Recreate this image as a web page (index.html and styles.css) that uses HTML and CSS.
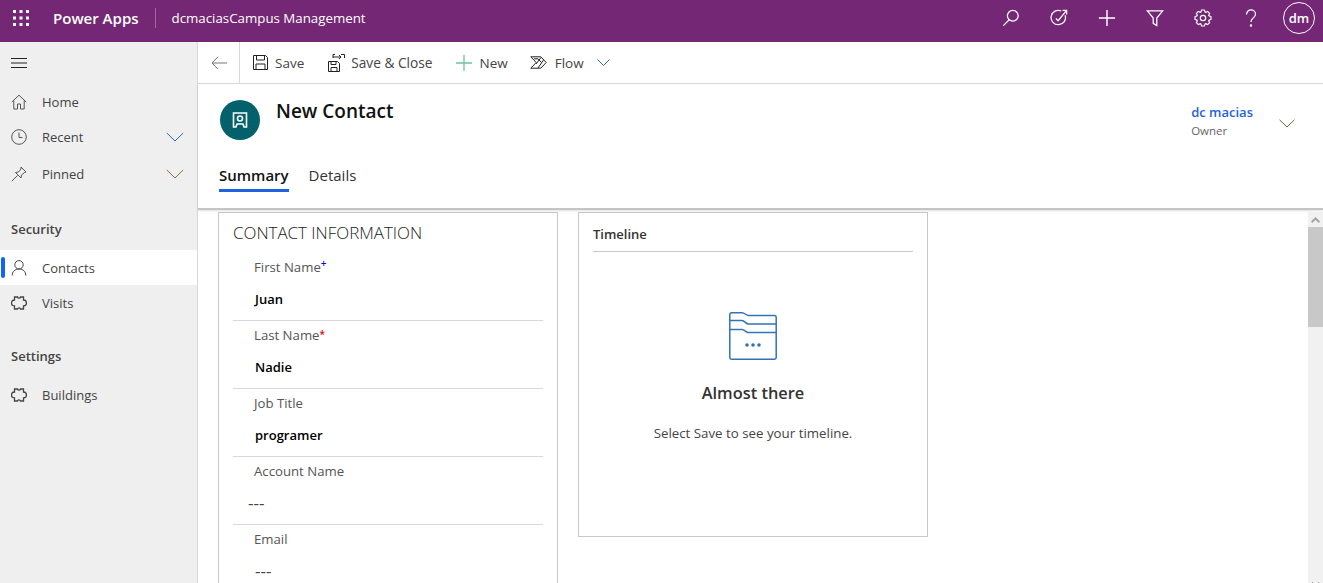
FILE: index.html
```html
<!DOCTYPE html>
<html lang="en">
<head>
    <meta charset="UTF-8">
    <title>New Contact</title>
    <link rel="stylesheet" href="styles.css">
</head>
<body>
    <header class="topbar">
        <svg class="waffle" width="16" height="16" viewBox="0 0 16 16" fill="#fff"><rect x="0" y="0" width="3" height="3"/><rect x="6.5" y="0" width="3" height="3"/><rect x="13" y="0" width="3" height="3"/><rect x="0" y="6.5" width="3" height="3"/><rect x="6.5" y="6.5" width="3" height="3"/><rect x="13" y="6.5" width="3" height="3"/><rect x="0" y="13" width="3" height="3"/><rect x="6.5" y="13" width="3" height="3"/><rect x="13" y="13" width="3" height="3"/></svg>
        <span class="brand">Power Apps</span>
        <span class="app-name">dcmaciasCampus Management</span>
        <div class="top-icons">
            <svg width="18" height="18" viewBox="0 0 20 20" fill="none" stroke="#fff" stroke-width="1.4"><circle cx="12" cy="7.5" r="6"/><path d="M8 12 1.500 18.500"/></svg>
            <svg width="18" height="18" viewBox="0 0 20 20" fill="none" stroke="#fff" stroke-width="1.4"><path d="M16.800 7a8 8 0 1 1-4.300-4.800"/><path d="M6.500 10.500l2.500 2.500 9-11M14 1.500h4.500V6"/></svg>
            <svg width="18" height="18" viewBox="0 0 20 20" fill="none" stroke="#fff" stroke-width="1.6"><path d="M10 1v18M1 10h18"/></svg>
            <svg width="18" height="18" viewBox="0 0 20 20" fill="none" stroke="#fff" stroke-width="1.4"><path d="M1.500 2h17l-6.500 8v8.500l-4-2.500v-6z"/></svg>
            <svg width="18" height="18" viewBox="0 0 20 20" fill="none" stroke="#fff" stroke-width="1.3"><circle cx="10" cy="10" r="3"/><path d="M11.560 1.140 12.390 3.420 12.960 3.660 15.160 2.630 17.370 4.840 16.340 7.040 16.580 7.610 18.860 8.440V11.560L16.580 12.390 16.340 12.960 17.370 15.160 15.160 17.370 12.960 16.340 12.390 16.580 11.560 18.860H8.440L7.610 16.580 7.040 16.340 4.840 17.370 2.630 15.160 3.660 12.960 3.420 12.390 1.140 11.560V8.440L3.420 7.610 3.660 7.040 2.630 4.840 4.840 2.630 7.040 3.660 7.610 3.420 8.440 1.140z"/></svg>
            <svg width="18" height="18" viewBox="0 0 20 20" fill="none" stroke="#fff" stroke-width="1.4"><path d="M5 6C5 3.200 7.200 1 10 1s5 2.200 5 4.800c0 4.200-5 4-5 8.700"/><circle cx="10" cy="18.300" r=".7"/></svg>
            <span class="avatar">dm</span>
        </div>
    </header>

    <div class="shell">
        <nav class="sidebar">
            <div class="burger"><svg width="16" height="12" viewBox="0 0 16 12" stroke="#222" stroke-width="1"><path d="M0 1.500h16M0 6h16M0 10.500h16"/></svg></div>
            <a class="nav-item">
                <svg width="16" height="16" viewBox="0 0 16 16" fill="none" stroke="#555" stroke-width="1"><path d="M.8 8 8 1.200 15.200 8M2.800 6.500v8.500h3.700v-5h3v5h3.700V6.500"/></svg>
                <span>Home</span>
            </a>
            <a class="nav-item">
                <svg width="16" height="16" viewBox="0 0 16 16" fill="none" stroke="#555" stroke-width="1"><circle cx="8" cy="8" r="7.300"/><path d="M8 3.500V8.500h3.500"/></svg>
                <span>Recent</span>
                <svg class="nav-chevron" width="18" height="10" viewBox="0 0 18 10" fill="none" stroke="#2b6ca8" stroke-width="1"><path d="M.800 1 9 9l8.200-8"/></svg>
            </a>
            <a class="nav-item nav-pinned">
                <svg width="16" height="16" viewBox="0 0 16 16" fill="none" stroke="#555" stroke-width="1"><path d="M10 1l5 5-1.500.5L10.500 9l-.5 3-5.500-5.500 3-.5 2.500-3zM6.500 9.500.8 15.200"/></svg>
                <span>Pinned</span>
                <svg class="nav-chevron" width="18" height="10" viewBox="0 0 18 10" fill="none" stroke="#8f6a35" stroke-width="1"><path d="M.800 1 9 9l8.200-8"/></svg>
            </a>
            <div class="nav-group">Security</div>
            <a class="nav-item active">
                <svg width="16" height="16" viewBox="0 0 16 16" fill="none" stroke="#444" stroke-width="1"><circle cx="8" cy="4.800" r="4.200"/><path d="M1.200 15.500c0-4 2.800-6.500 6.800-6.500s6.800 2.500 6.800 6.500"/></svg>
                <span>Contacts</span>
            </a>
            <a class="nav-item">
                <svg width="16" height="14" viewBox="0 0 16 14" fill="none" stroke="#444" stroke-width="1.300"><path d="M3.500 1H6.500C6.800 2.400 9.200 2.400 9.500 1H12.500V4C14 4 15.500 4.800 15.500 7 15.500 9.200 14 10 12.500 10V13H9.500C9.200 11.600 6.800 11.600 6.500 13H3.500V10C2 10 .5 9.200 .5 7 .5 4.800 2 4 3.500 4z"/></svg>
                <span>Visits</span>
            </a>
            <div class="nav-group nav-group-second">Settings</div>
            <a class="nav-item">
                <svg width="16" height="14" viewBox="0 0 16 14" fill="none" stroke="#444" stroke-width="1.300"><path d="M3.500 1H6.500C6.800 2.400 9.200 2.400 9.500 1H12.500V4C14 4 15.500 4.800 15.500 7 15.500 9.200 14 10 12.500 10V13H9.500C9.200 11.600 6.800 11.600 6.500 13H3.500V10C2 10 .5 9.200 .5 7 .5 4.800 2 4 3.500 4z"/></svg>
                <span>Buildings</span>
            </a>
        </nav>

        <main class="main">
            <div class="commandbar">
                <div class="back"><svg width="16" height="14" viewBox="0 0 16 14" fill="none" stroke="#777" stroke-width="1"><path d="M7 .8 1 7l6 6.200M1 7h15"/></svg></div>
                <button class="cmd cmd-first">
                    <svg width="15" height="15" viewBox="0 0 15 15" fill="none" stroke="#222" stroke-width="1"><path d="M.5.500h12l2 2v12H.5zM3.500.500v4.500h8V.500M3 14.500V9h9v5.500"/></svg>
                    Save
                </button>
                <button class="cmd cmd-close">
                    <svg width="17" height="18" viewBox="0 0 17 18" fill="none" stroke="#222" stroke-width="1"><path d="M.5 7.500h9l2 2v8H.5zM3 7.500v3h5v-3M3 17.500v-4h6v4M5 4V.500h2M13 .500h3.500V4M5 3h8M11 1l2 2-2 2"/></svg>
                    Save &amp; Close
                </button>
                <button class="cmd cmd-new">
                    <svg width="16" height="16" viewBox="0 0 16 16" fill="none" stroke="#6fc295" stroke-width="1.300"><path d="M8 0v16M0 8h16"/></svg>
                    New
                </button>
                <button class="cmd cmd-flow">
                    <svg width="17" height="13" viewBox="0 0 17 13" fill="none" stroke="#222" stroke-width="1"><path d="M.800.800h10l5.400 5.700-5.400 5.700H.800l5.400-5.700zM4 2.800h4l3.500 3.700M13.500 4 8 12M11 1.500 6 8"/></svg>
                    Flow
                </button>
                <svg class="cmd-chevron" width="13" height="7" viewBox="0 0 13 7" fill="none" stroke="#2b6ca8" stroke-width="1"><path d="M.500.500l6 6 6-6"/></svg>
            </div>

            <div class="record-header">
                <div class="record-top">
                    <div class="record-icon">
                        <svg width="16" height="16" viewBox="0 0 16 16" fill="none" stroke="#fff" stroke-width="1.600"><path d="M1.500 15V1h13v14h-2.500l-1-3H5l-1 3z"/><circle cx="8" cy="6.500" r="2.500"/></svg>
                    </div>
                    <h1 class="record-title">New Contact</h1>
                    <div class="owner">
                        <a class="owner-name">dc macias</a>
                        <span class="owner-role">Owner</span>
                    </div>
                    <svg class="owner-chevron" width="16" height="9" viewBox="0 0 16 9" fill="none" stroke="#7a5f38" stroke-width="1"><path d="M.500.800 8 8 15.500.800"/></svg>
                </div>
                <div class="tabs">
                    <a class="tab tab-active">Summary</a>
                    <a class="tab">Details</a>
                </div>
            </div>

            <div class="content">
                <div class="sections">
                    <section class="card contact-card">
                        <h2 class="card-title">CONTACT INFORMATION</h2>
                        <div class="field">
                            <label>First Name<sup class="mark-blue">+</sup></label>
                            <div class="value">Juan</div>
                        </div>
                        <div class="field">
                            <label>Last Name<sup class="mark-red">*</sup></label>
                            <div class="value">Nadie</div>
                        </div>
                        <div class="field">
                            <label>Job Title</label>
                            <div class="value">programer</div>
                        </div>
                        <div class="field">
                            <label>Account Name</label>
                            <div class="value value-empty value-out">---</div>
                        </div>
                        <div class="field">
                            <label>Email</label>
                            <div class="value value-empty">---</div>
                        </div>
                    </section>
                    <section class="card timeline-card">
                        <h2 class="timeline-title">Timeline</h2>
                        <div class="timeline-body">
                            <svg width="48" height="48" viewBox="0 0 48 48" fill="none" stroke="#3273b5" stroke-width="1.500"><path d="M.8 2.500A1.700 1.700 0 0 1 2.500.8h10.500c3 0 4 2.700 6.500 2.700h26a1.700 1.700 0 0 1 1.700 1.700v40.300a1.700 1.700 0 0 1-1.700 1.700H2.500a1.700 1.700 0 0 1-1.700-1.700z"/><path d="M.8 8.500h12c3 0 4 3.500 6.500 3.500h28M.8 17.500h12c3 0 4 3 6.500 3h28"/><g fill="#3273b5" stroke="none"><circle cx="18" cy="33" r="1.800"/><circle cx="24" cy="33" r="1.800"/><circle cx="30" cy="33" r="1.800"/></g></svg>
                            <h3 class="almost">Almost there</h3>
                            <p class="almost-text">Select Save to see your timeline.</p>
                        </div>
                    </section>
                </div>
                <div class="scrollbar">
                    <div class="scroll-up"><svg width="9" height="6" viewBox="0 0 9 6" fill="#a0a0a0"><path d="M4.500 0 9 4.500 7.800 6 4.500 2.800 1.200 6 0 4.500z"/></svg></div>
                    <div class="scroll-thumb"></div>
                    <div class="scroll-down"></div>
                </div>
            </div>
        </main>
    </div>
</body>
</html>
```

FILE: styles.css
```css
* {
    box-sizing: border-box;
}

html, body {
    height: 100%;
}

body {
    margin: 0;
    overflow: hidden;
    font-family: "Open Sans", "Noto Sans", Arial, sans-serif;
    font-size: 13px;
    color: #333;
    background-color: white;
}

/* top bar */
.topbar {
    display: flex;
    align-items: center;
    height: 42px;
    padding-bottom: 6px;
    background-color: #742774;
    color: white;
}

.waffle {
    margin-left: 13px;
}

.brand {
    margin-left: 24px;
    padding-right: 16px;
    border-right: 1px solid #9a6a9a;
    line-height: 20px;
    font-size: 15px;
    font-weight: 600;
}

.app-name {
    margin-left: 16px;
    font-size: 13.3px;
}

.top-icons {
    display: flex;
    align-items: center;
    gap: 30px;
    margin-left: auto;
    margin-right: 8px;
}

.avatar {
    display: flex;
    align-items: center;
    justify-content: center;
    width: 32px;
    height: 32px;
    margin-left: -7px;
    border: 1px solid white;
    border-radius: 50%;
    font-size: 13px;
    font-weight: 600;
}

.shell {
    display: flex;
    height: 541px;
}

/* sidebar */
.sidebar {
    flex: none;
    width: 198px;
    background-color: #efefef;
    border-right: 1px solid #d8d8d8;
}

.burger {
    display: flex;
    align-items: center;
    height: 42px;
    padding-left: 11px;
}

.nav-item {
    position: relative;
    display: flex;
    align-items: center;
    gap: 15px;
    height: 35px;
    padding-left: 11px;
    padding-right: 13px;
    color: #444;
}

.nav-pinned {
    margin-top: 2px;
}

.nav-chevron {
    margin-left: auto;
}

.nav-group {
    display: flex;
    align-items: center;
    height: 36px;
    margin-top: 20px;
    margin-bottom: 3px;
    padding-left: 11px;
    font-weight: 600;
    color: #444;
}

.nav-group-second {
    margin-top: 18px;
}

.active {
    background-color: white;
}

.active::before {
    content: "";
    position: absolute;
    left: 1px;
    top: 7px;
    width: 4px;
    height: 21px;
    border-radius: 2px;
    background-color: #0f62fe;
}

/* main column */
.main {
    flex: 1;
    min-width: 0;
    display: flex;
    flex-direction: column;
}

.commandbar {
    display: flex;
    align-items: center;
    flex: none;
    height: 42px;
    border-bottom: 1px solid #d8d8d8;
}

.back {
    display: flex;
    align-items: center;
    height: 41px;
    padding: 0 12px 0 13px;
    border-right: 1px solid #d8d8d8;
}

.cmd {
    display: flex;
    align-items: center;
    gap: 8px;
    padding: 0;
    border: none;
    background: none;
    font-family: inherit;
    font-size: 13.5px;
    color: #444;
}

.cmd-first {
    gap: 7px;
    margin-left: 13px;
}

.cmd-close {
    gap: 6px;
    margin-left: 24px;
    font-size: 13.7px;
}

.cmd-new {
    gap: 7px;
    margin-left: 24px;
}

.cmd-flow {
    margin-left: 22px;
}

.cmd-chevron {
    margin-left: 13px;
}

.record-header {
    position: relative;
    flex: none;
    height: 126px;
    padding: 15px 28px 0 22px;
    border-bottom: 2px solid #c4c4c4;
    box-shadow: 0 1px 2px rgba(0, 0, 0, 0.12);
}

.record-top {
    display: flex;
    height: 57px;
}

.record-icon {
    display: flex;
    align-items: center;
    justify-content: center;
    width: 40px;
    height: 40px;
    margin-top: 1px;
    background-color: #03616b;
    border-radius: 50%;
}

.record-title {
    margin: 0 0 0 16px;
    font-size: 19px;
    line-height: 24px;
    font-weight: 600;
    color: #111;
}

.owner {
    display: flex;
    flex-direction: column;
    margin-left: auto;
    margin-right: 26px;
    padding-top: 4px;
}

.owner-name {
    font-size: 13px;
    font-weight: 600;
    line-height: 18px;
    color: #1f63e0;
}

.owner-role {
    margin-top: 2px;
    font-size: 11.5px;
    line-height: 16px;
    color: #666;
}

.owner-chevron {
    margin-top: 20px;
}

.tabs {
    display: flex;
    gap: 20px;
}

.tab {
    height: 38px;
    padding-top: 9px;
    font-size: 15px;
    line-height: 20px;
    color: #333;
}

.tab-active {
    height: 36px;
    margin-left: -1px;
    font-weight: 600;
    color: #111;
    border-bottom: 3px solid #1f63e0;
}

.content {
    flex: 1;
    min-height: 0;
    display: flex;
    overflow: hidden;
}

.sections {
    flex: 1;
    display: flex;
    align-items: flex-start;
    gap: 20px;
    padding: 2px 0 0 20px;
}

.card {
    width: 340px;
    border: 1px solid #c8c8c8;
    background-color: white;
}

.contact-card {
    height: 500px;
    padding: 0 14px;
}

.card-title {
    margin: 0;
    padding-top: 9px;
    height: 40px;
    font-size: 16.9px;
    line-height: 22px;
    font-weight: 300;
    color: #222;
}

.field {
    height: 68px;
    padding: 5px 0 0 21px;
    border-bottom: 1px solid #d8d8d8;
}

.field label {
    display: block;
    font-size: 13.2px;
    line-height: 18px;
    color: #555;
}

.field sup {
    font-size: 10px;
    font-weight: 600;
    line-height: 0;
}

.mark-blue {
    color: #0000ee;
}

.mark-red {
    vertical-align: 2px;
    color: #e00;
}

.value {
    margin-top: 14px;
    margin-left: 1px;
    line-height: 18px;
    font-weight: 600;
    color: #000;
}

.value-empty {
    font-size: 17px;
    font-weight: 400;
    color: #444;
}

.value-out {
    margin-left: -6px;
}

.timeline-card {
    width: 350px;
    height: 325px;
    padding: 0 14px;
}

.timeline-title {
    margin: 0;
    height: 39px;
    padding-top: 12px;
    border-bottom: 1px solid #c8c8c8;
    font-size: 13px;
    line-height: 18px;
    font-weight: 600;
    color: #333;
}

.timeline-body {
    display: flex;
    flex-direction: column;
    align-items: center;
    padding-top: 60px;
}

.almost {
    margin: 21px 0 0;
    font-size: 16.4px;
    line-height: 24px;
    font-weight: 600;
    color: #333;
}

.almost-text {
    margin: 19px 0 0;
    font-size: 13.3px;
    line-height: 18px;
    color: #444;
}

.scrollbar {
    flex: none;
    display: flex;
    flex-direction: column;
    width: 15px;
    margin-top: 2px;
    background-color: #f1f1f1;
}

.scroll-up {
    display: flex;
    align-items: center;
    justify-content: center;
    height: 15px;
}

.scroll-thumb {
    height: 100px;
    background-color: #c8c8c8;
}

/* tip of the down arrow, cut off by the window */
.scroll-down {
    width: 7px;
    height: 1px;
    margin: auto 0 0 4px;
    border-left: 1px solid #a0a0a0;
    border-right: 1px solid #a0a0a0;
}
```
